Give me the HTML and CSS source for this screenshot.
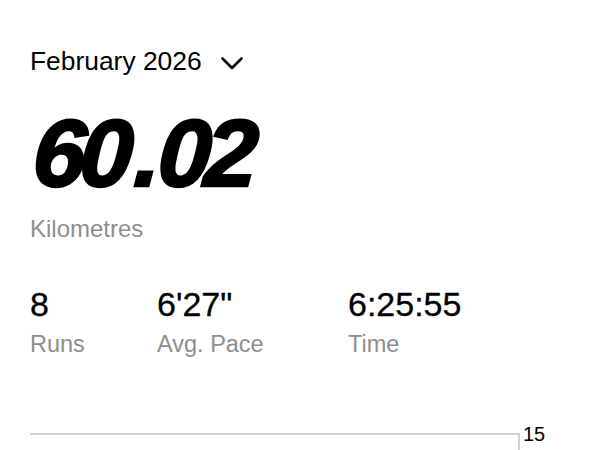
FILE: index.html
```html
<!DOCTYPE html>
<html lang="en">
<head>
<meta charset="utf-8">
<title>February 2026</title>
<link rel="stylesheet" href="styles.css">
</head>
<body>
<main class="page">
  <div class="month">
    <span class="month-label">February 2026</span>
    <svg class="chevron" width="22" height="13" viewBox="0 0 22 13" aria-hidden="true">
      <path d="M1.5 1.5 L11 11 L20.5 1.5" fill="none" stroke="#000" stroke-width="2.6" stroke-linecap="round" stroke-linejoin="round"/>
    </svg>
  </div>
  <div class="distance"><span class="distance-value">60<span class="dot">.</span>02</span></div>
  <div class="unit">Kilometres</div>
  <div class="stats">
    <div class="stat stat-runs">
      <div class="stat-value">8</div>
      <div class="stat-label">Runs</div>
    </div>
    <div class="stat stat-pace">
      <div class="stat-value">6'27"</div>
      <div class="stat-label">Avg. Pace</div>
    </div>
    <div class="stat stat-time">
      <div class="stat-value">6:25:55</div>
      <div class="stat-label">Time</div>
    </div>
  </div>
  <div class="chart">
    <div class="track"></div>
    <div class="axis-label">15</div>
  </div>
</main>
</body>
</html>
```

FILE: styles.css
```css
html, body {
  margin: 0;
  padding: 0;
  background: #ffffff;
  overflow: hidden;
}

.page {
  width: 600px;
  height: 450px;
  box-sizing: border-box;
  padding: 43px 30px 0 30px;
  font-family: "Liberation Sans", Arial, sans-serif;
  color: #000;
}

.month {
  display: flex;
  align-items: center;
  height: 36px;
}

.month-label {
  font-size: 26.4px;
  line-height: 36px;
}

.chevron {
  margin-left: 19px;
  margin-top: 4px;
}

.distance {
  margin-top: 27px;
  height: 95px;
  font-size: 95px;
  line-height: 95px;
  font-weight: bold;
  font-style: italic;
}

.distance-value {
  display: inline-block;
  letter-spacing: -6px;
  -webkit-text-stroke: 2.5px #000;
  transform: skewX(-4deg);
  transform-origin: left bottom;
}

.dot {
  display: inline-block;
  margin: 0 3px 0 8px;
}

.unit {
  margin-top: 14px;
  font-size: 24px;
  line-height: 28px;
  color: #8e8e8e;
}

.stats {
  display: flex;
  margin-top: 41px;
}

.stat-runs { width: 127px; }
.stat-pace { width: 191px; }

.stat-value {
  font-size: 34px;
  line-height: 40px;
  -webkit-text-stroke: 0.3px #000;
}

.stat-label {
  margin-top: 6px;
  font-size: 23.5px;
  line-height: 28px;
  color: #8e8e8e;
}

.chart {
  display: flex;
  align-items: flex-start;
  margin-top: 75px;
}

.track {
  width: 488px;
  height: 20px;
  border-top: 2px solid #d2d2d2;
  border-right: 2px solid #d2d2d2;
}

.axis-label {
  margin-left: 3px;
  margin-top: -9px;
  font-size: 20px;
  line-height: 20px;
}
```
